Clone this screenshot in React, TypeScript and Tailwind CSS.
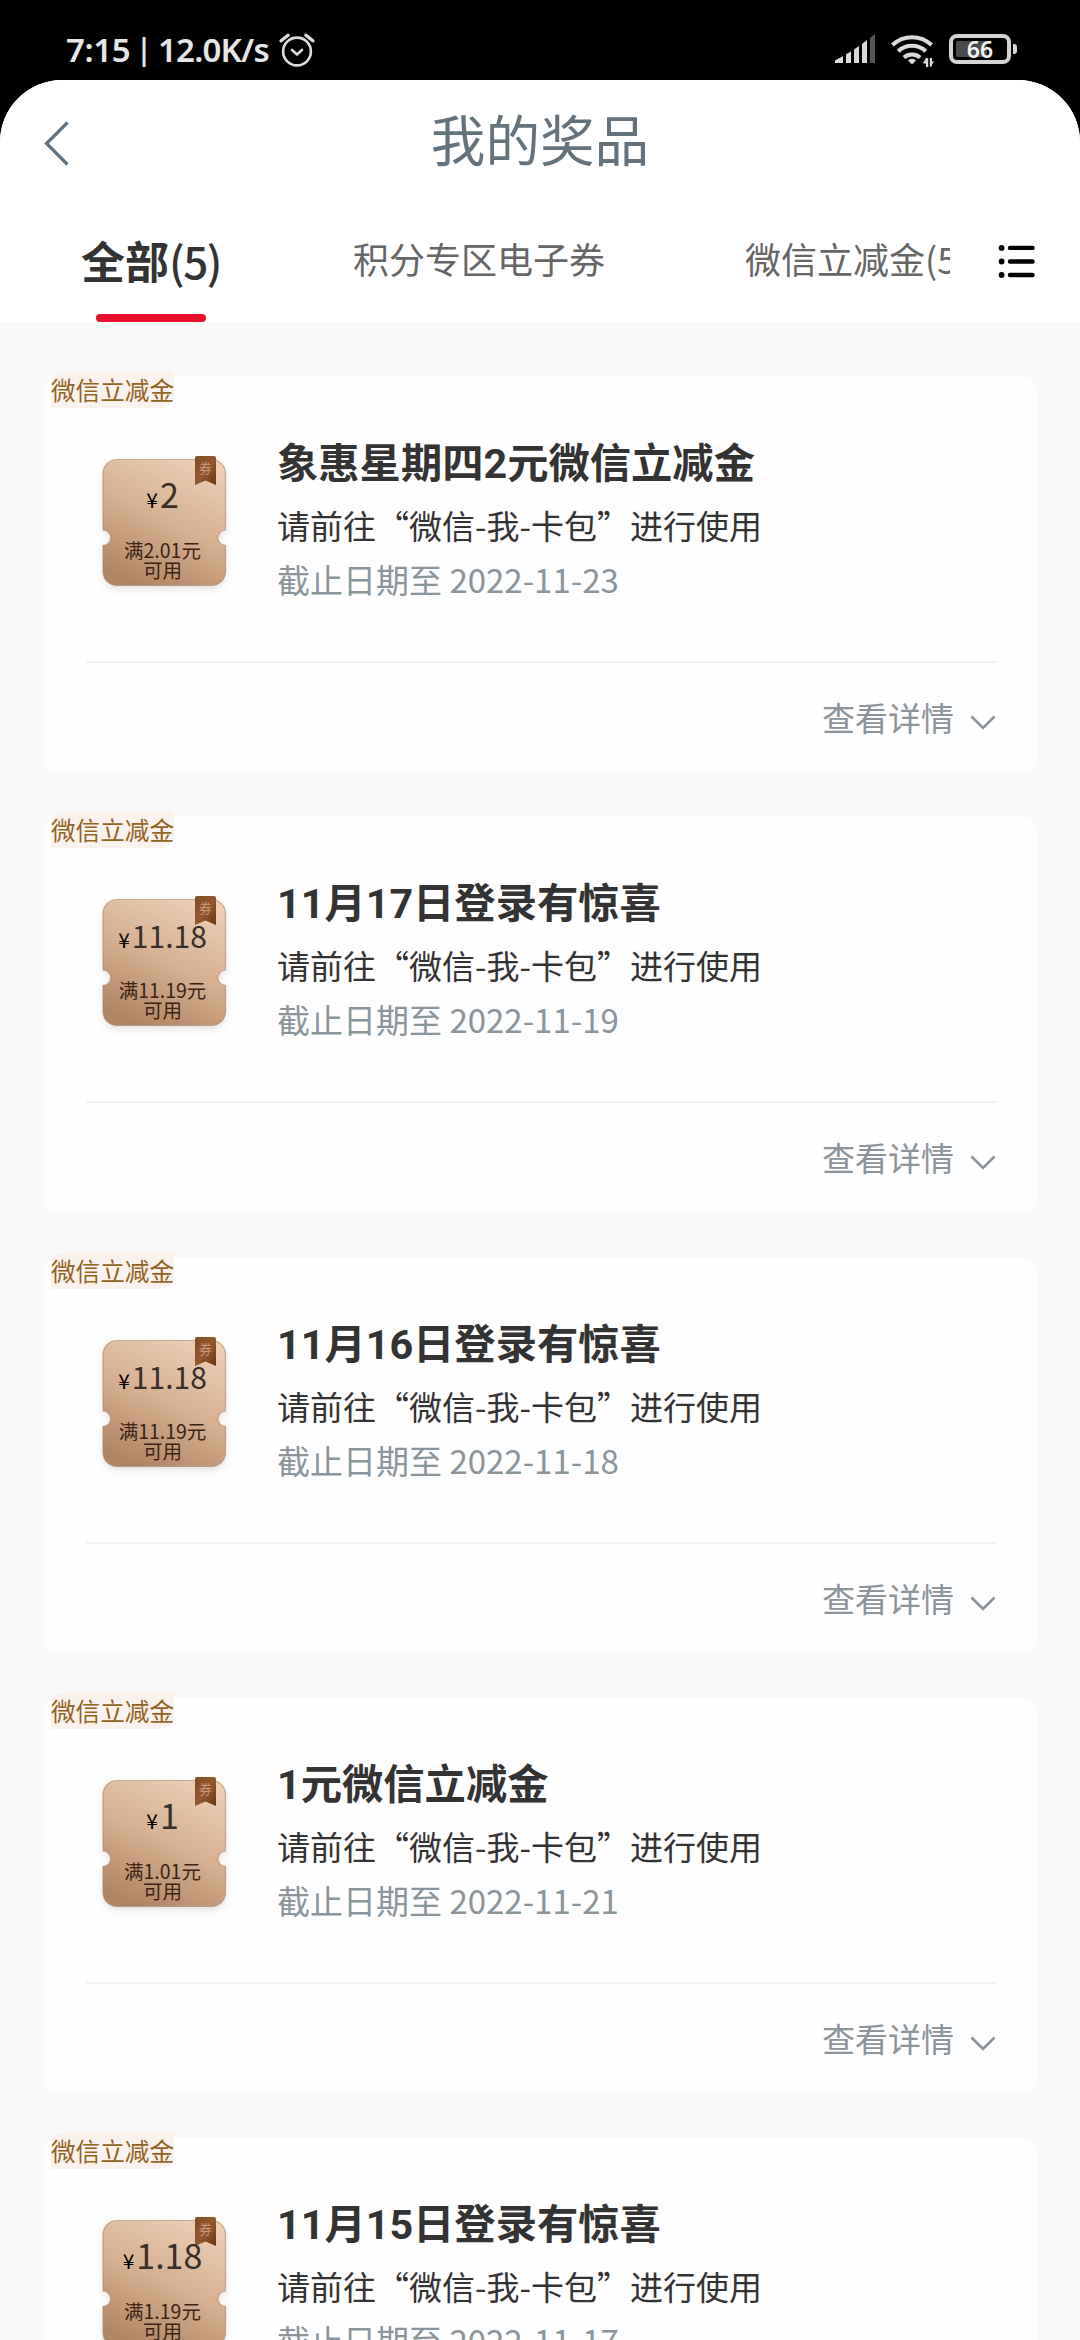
type Coupon = {
  title: string;
  amount: string;
  small?: boolean;
  limit: string;
  date: string;
};

const coupons: Coupon[] = [
  { title: "象惠星期四2元微信立减金", amount: "2", limit: "满2.01元", date: "2022-11-23" },
  { title: "11月17日登录有惊喜", amount: "11.18", small: true, limit: "满11.19元", date: "2022-11-19" },
  { title: "11月16日登录有惊喜", amount: "11.18", small: true, limit: "满11.19元", date: "2022-11-18" },
  { title: "1元微信立减金", amount: "1", limit: "满1.01元", date: "2022-11-21" },
  { title: "11月15日登录有惊喜", amount: "1.18", limit: "满1.19元", date: "2022-11-17" },
];

function StatusBar() {
  return (
    <div className="flex h-20 items-start justify-between pl-[66px] pr-[63px] pt-[33px]">
      <div className="flex items-start">
        <div className="mt-px flex w-[204px] whitespace-nowrap font-['Noto_Sans'] text-[33px] font-semibold leading-[32px] text-[#e6e6e6]">
          <span className="w-[67px] tracking-[-0.400px]">7:15</span>
          <span className="w-[22px] text-center text-[30px] leading-[30px]">|</span>
          <span className="ml-[3px] tracking-[-0.800px]">12.0K/s</span>
        </div>
        <svg className="ml-[9px] -mt-px" width="36" height="36" viewBox="0 0 36 36" fill="none" stroke="#dcdcdc" strokeWidth="2.6" strokeLinecap="round" strokeLinejoin="round">
          <circle cx="18" cy="19.500" r="13.900" />
          <path d="M13 18 18 22.500 23 18" />
          <path d="M2.200 8.800 9 3.200M33.800 8.800 27 3.200" strokeWidth="3.4" />
        </svg>
      </div>
      <div className="flex items-start pt-px">
        <svg width="41" height="30" viewBox="0 0 41 30" fill="#dadada">
          <path d="M0 29v-2.6L8 22v7zM11 29V20.2l5-2.8V29zM19 29V15.4l5-3.4V29zM27 29V10l5-4v23z" />
          <path d="M35 29V4l5-4v29z" fill="#555" />
        </svg>
        <svg className="ml-[15px]" width="43" height="34" viewBox="0 0 43 34" fill="none" stroke="#dadada" strokeWidth="4">
          <path d="M1.400 11a28.500 28.500 0 0 1 39.200 0" />
          <path d="M7.200 17.200a20.200 20.200 0 0 1 27.600 0" />
          <path d="M12.900 23.400a12.400 12.400 0 0 1 16.200 0" />
          <path fill="#dadada" stroke="none" d="M17 26.500q4-3.600 8 0L21 30.500z" />
          <path fill="#dadada" stroke="none" d="M35 24h2.200v9H35v-3.500h-3.200zM38.800 32.500V24H41v3.500h2.200L41 30.500v2z" />
        </svg>
        <div className="relative ml-[15px] flex h-[30px] w-[62px] items-center justify-center rounded-[8px] border-4 border-[#d4d4d4]">
          <div className="absolute left-[3px] top-[3px] h-4 w-[31px] rounded-[2px] bg-[#4a4a4a]" />
          <span className="relative font-['Noto_Sans'] text-[23px] font-semibold leading-[22px] text-[#f2f2f2]">66</span>
        </div>
        <div className="ml-[2px] mt-[10px] h-[10px] w-1 rounded-r-[3px] bg-[#d4d4d4]" />
      </div>
    </div>
  );
}

function Header() {
  return (
    <div className="flex h-[122px] items-start justify-between px-[44px]">
      <svg className="mt-[41px]" width="26" height="46" viewBox="0 0 26 46" fill="none" stroke="#5f7380" strokeWidth="3.2">
        <path d="M23.500 1.500 2.500 22.500 23.500 43.500" />
      </svg>
      <h1 className="pt-[18px] text-[54.600px] font-normal leading-[80px] text-[#64727c]">我的奖品</h1>
      <div className="w-[26px]" />
    </div>
  );
}

function Tabs() {
  return (
    <div className="flex h-[120px] items-start justify-between">
      <div className="flex w-[950px] items-start overflow-hidden whitespace-nowrap text-[36px] leading-[60px] text-[#666]">
        <div className="ml-[75px] flex w-[152px] shrink-0 flex-col items-center pt-[28px]">
          <span className="text-[44px] font-bold leading-[60px] text-[#333]">
            全部<span className="font-medium tracking-[-1.500px]">(5)</span>
          </span>
          <div className="mt-[24px] h-2 w-[110px] rounded-full bg-[#ea0f2a]" />
        </div>
        <span className="ml-[126px] mt-[26px]">积分专区电子券</span>
        <span className="ml-[140px] mt-[26px]">微信立减金(5)</span>
      </div>
      <svg className="mr-[45px] mt-[43px]" width="38" height="34" viewBox="0 0 38 34" fill="#000" stroke="#000" strokeWidth="4.4" strokeLinecap="round">
        <path d="M13 2.9H35.5M13 16.5H35.5M13 30H35.5" />
        <g stroke="none">
          <circle cx="4.6" cy="2.9" r="2.9" />
          <circle cx="4.6" cy="16.5" r="2.9" />
          <circle cx="4.6" cy="30" r="2.9" />
        </g>
      </svg>
    </div>
  );
}

function CouponBadge({ amount, limit, small }: Coupon) {
  return (
    <div className="relative h-[127px] w-[124px] text-center">
      <svg className="absolute -left-3 -top-3" width="148" height="155" viewBox="-12 -12 148 155">
        <defs>
          <linearGradient id="face" x1="0.75" y1="0" x2="0.3" y2="1">
            <stop offset="0" stopColor="#ecceb4" />
            <stop offset="0.5" stopColor="#d6b091" />
            <stop offset="1" stopColor="#b08564" />
          </linearGradient>
          <linearGradient id="ribbon" x1="0" y1="0" x2="1" y2="1">
            <stop offset="0" stopColor="#7d4a22" />
            <stop offset="0.5" stopColor="#935a30" />
            <stop offset="1" stopColor="#6b350a" />
          </linearGradient>
          <filter id="soft" x="-20%" y="-20%" width="140%" height="140%">
            <feDropShadow dx="0" dy="3" stdDeviation="3.500" floodColor="#8a7a70" floodOpacity="0.22" />
          </filter>
        </defs>
        <path
          filter="url(#soft)"
          fill="url(#face)"
          stroke="#a98468"
          strokeOpacity="0.6"
          strokeWidth="1.2"
          d="M15 .5H109.500a14 14 0 0 1 14 14V71a7.700 7.700 0 0 0 0 15.400V112.500a14 14 0 0 1-14 14H15a14 14 0 0 1-14-14V86.400a7.700 7.700 0 0 0 0-15.400V14.500a14 14 0 0 1 14-14z"
        />
        <path fill="url(#ribbon)" d="M95-3H112a2 2 0 0 1 2 2V26L103.500 21.500 93 26V-1a2 2 0 0 1 2-2z" />
      </svg>
      <span className="absolute left-[97px] top-[2px] text-[13px] leading-[14px] text-[#c79c7c]">券</span>
      <div className="relative -left-[1.500px] flex flex-col items-center pt-[15px]">
        <div className="h-10 whitespace-nowrap text-[34px] leading-[40px] text-[#3a2f28]">
          <span className="mr-[2px] text-[21px] leading-none text-black">¥</span>
          <span className={small ? "text-[30px] leading-none" : "leading-none"}>{amount}</span>
        </div>
        <p className="mt-[26px] whitespace-nowrap text-[19.500px] leading-[20px] text-[#3d2310]">
          {limit}
          <br />
          可用
        </p>
      </div>
    </div>
  );
}

function Card(coupon: Coupon) {
  return (
    <div className="h-[395px] shrink-0 rounded-[14px] bg-[#fefefe] pl-[42px] pr-[41px]">
      <div className="-ml-[35px] -mt-[5px] h-9 w-[123px] whitespace-nowrap rounded-br-[14px] rounded-tl-[12px] bg-[#f9f2ec] text-[24.600px] leading-[34px] text-[#93621f]">
        微信立减金
      </div>
      <div className="flex h-[255px] items-start border-b-2 border-[#f0f1f2] pl-[16px] pt-[51px]">
        <CouponBadge {...coupon} />
        <div className="-mt-[25px] ml-[51px] whitespace-nowrap text-[33px] leading-[54px]">
          <h2 className="font-['Roboto','Noto_Sans_CJK_SC',sans-serif] text-[41.300px] font-bold leading-[60px] text-[#333]">{coupon.title}</h2>
          <p className="mt-[4px] text-[#333]">请前往“微信-我-卡包”进行使用</p>
          <p className="text-[#8a959b]">截止日期至 {coupon.date}</p>
        </div>
      </div>
      <div className="flex items-start justify-end pt-[29px] text-[33px] leading-[50px] text-[#8a949a]">
        <span>查看详情</span>
        <svg className="ml-[16px] mt-[23px]" width="26" height="16" viewBox="0 0 26 16" fill="none" stroke="#8a949a" strokeWidth="2.6">
          <path d="M1.500 1.500 13 13 24.500 1.500" />
        </svg>
      </div>
    </div>
  );
}

export default function App() {
  return (
    <div lang="zh-CN" className="h-[2340px] w-[1080px] overflow-hidden bg-black font-['Noto_Sans_CJK_SC',sans-serif]">
      <StatusBar />
      <div className="h-[2260px] overflow-hidden rounded-t-[62px] bg-[#f9f9f9]">
        <div className="bg-white">
          <Header />
          <Tabs />
        </div>
        <div className="flex flex-col gap-[45.300px] pl-[44px] pr-[43px] pt-[55px]">
          {coupons.map((c, i) => (
            <Card key={i} {...c} />
          ))}
        </div>
      </div>
    </div>
  );
}
